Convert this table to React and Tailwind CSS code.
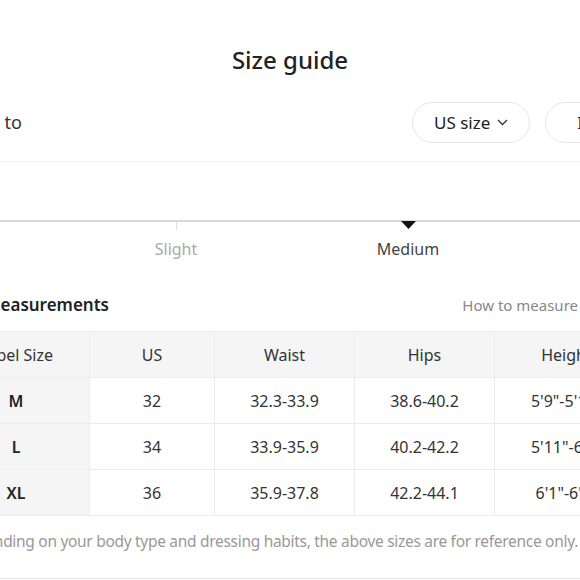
import React from "react";

const rows = [
  { label: "M", us: "32", waist: "32.3-33.9", hips: "38.6-40.2", height: `5'9"-5'11"` },
  { label: "L", us: "34", waist: "33.9-35.9", hips: "40.2-42.2", height: `5'11"-6'1"` },
  { label: "XL", us: "36", waist: "35.9-37.8", hips: "42.2-44.1", height: `6'1"-6'3"` },
];

function Pill({ children, chevron, wide }) {
  return (
    <div
      className={
        wide
          ? "h-[41px] px-[31px] rounded-full border border-[#e6e6e6] bg-white flex items-center text-[17px] text-[#222] whitespace-nowrap"
          : "h-[41px] px-[21px] rounded-full border border-[#e6e6e6] bg-white flex items-center gap-[7px] text-[17px] text-[#222] whitespace-nowrap"
      }
    >
      {children}
      {chevron && (
        <svg width="11" height="7" viewBox="0 0 11 7" fill="none">
          <polyline points="1,1 5.5,5.5 10,1" stroke="#333" strokeWidth="1.3" />
        </svg>
      )}
    </div>
  );
}

export default function App() {
  return (
    <div className="w-[580px] h-[580px] overflow-hidden bg-white" style={{ fontFamily: '"Noto Sans", "Open Sans", sans-serif' }}>
      <div className="-ml-[160px] w-[900px]">
        <h1 className="pt-[44px] text-center text-[24px] leading-[32px] font-medium text-[#222]">Size guide</h1>

        <div className="pb-[18px] border-b border-[#eeeeee]">
          <div className="mt-[26px] flex items-center">
            <div className="w-[182px] text-right text-[18px] text-[#333] whitespace-nowrap">Convert to</div>
            <div className="ml-[390px] flex gap-[15px]">
              <Pill chevron>US size</Pill>
              <Pill wide>Inch</Pill>
            </div>
          </div>
        </div>

        <div className="mt-[58px] h-[2px] bg-[#d9d9d9]" />
        <div className="ml-[220px] flex">
          <div className="w-[232px] flex flex-col items-center">
            <div className="h-[8px] w-px bg-[#e0e0e0]" />
            <div className="mt-[7px] text-[16px] leading-[24px] text-[#aaaaaa]">Slight</div>
          </div>
          <div className="w-[232px] flex flex-col items-center">
            <svg width="15" height="8" viewBox="0 0 15 8" className="-mt-px">
              <polygon points="0,0 15,0 7.5,8" fill="#111" />
            </svg>
            <div className="mt-[8px] text-[16px] leading-[24px] text-[#444]">Medium</div>
          </div>
        </div>

        <div className="mt-[32px] flex items-center">
          <div className="w-[269px] text-right text-[17px] leading-[24px] font-semibold text-[#222] whitespace-nowrap">Body measurements</div>
          <div className="flex-1 pr-[162px] text-right text-[15px] leading-[24px] text-[#888] whitespace-nowrap">How to measure</div>
        </div>

        <table className="mt-[14px] ml-[102px] table-fixed border-collapse text-[16px] text-[#333]">
          <colgroup>
            <col className="w-[147px]" />
            <col className="w-[125px]" />
            <col className="w-[140px]" />
            <col className="w-[140px]" />
            <col className="w-[144px]" />
          </colgroup>
          <thead>
            <tr className="h-[46px] bg-[#f5f5f5]">
              {["Label Size", "US", "Waist", "Hips", "Height"].map((h) => (
                <th key={h} className="border border-[#ececec] font-normal text-center">{h}</th>
              ))}
            </tr>
          </thead>
          <tbody>
            {rows.map((r) => (
              <tr key={r.label} className="h-[46px]">
                <td className="border border-[#ececec] bg-[#f5f5f5] text-center font-semibold text-[#222]">{r.label}</td>
                <td className="border border-[#ececec] text-center">{r.us}</td>
                <td className="border border-[#ececec] text-center">{r.waist}</td>
                <td className="border border-[#ececec] text-center">{r.hips}</td>
                <td className="border border-[#ececec] text-center whitespace-nowrap">{r.height}</td>
              </tr>
            ))}
          </tbody>
        </table>

        <p className="mt-[13px] pr-[162px] text-right text-[15.5px] tracking-[-0.3px] leading-[24px] text-[#999] whitespace-nowrap">
          Depending on your body type and dressing habits, the above sizes are for reference only.
        </p>
        <div className="mt-[25px] border-t border-[#e8e8e8]" />
      </div>
    </div>
  );
}
